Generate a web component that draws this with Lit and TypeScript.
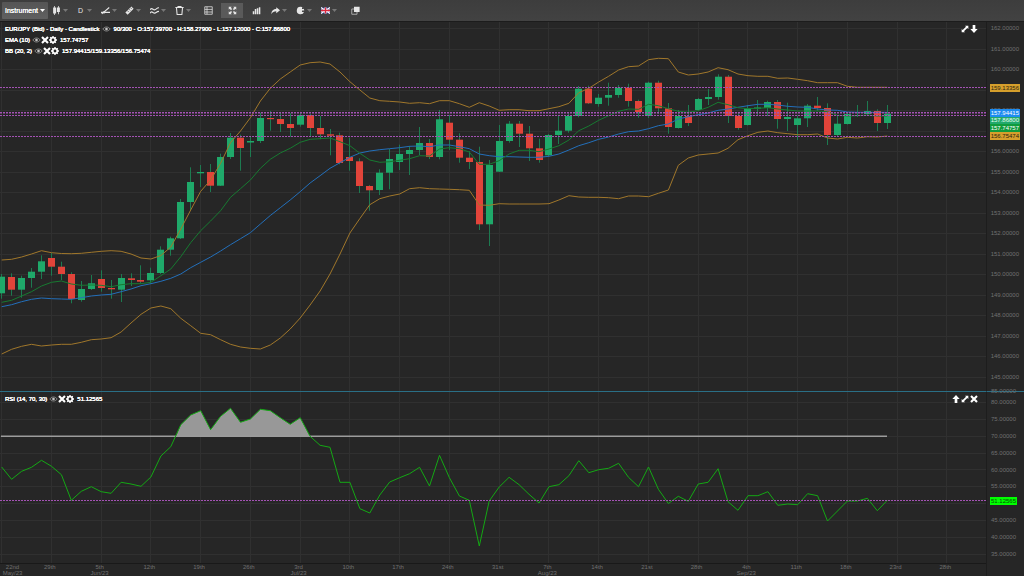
import { LitElement, html, css, svg } from "lit";
import { customElement, property } from "lit/decorators.js";

/* ---- Chart data, in plot units (1 bar = 9.95 units wide) ---- */
const BAR_START = 1.7;
const BAR_STEP = 9.95;
const barX = (i: number) => BAR_START + i * BAR_STEP;

// Candle: [rising, bodyTop, bodyBottom, wickTop, wickBottom]
type Candle = [number, number, number, number, number];
const CANDLES: Candle[] = [
  [1, 276.7, 293.3, 274, 298.7], [0, 277, 289.7, 273.3, 295.7], [1, 278, 289.7, 275.7, 297.7], [1, 271.7, 278, 268, 287.7],
  [1, 261.3, 271.7, 255.3, 279], [0, 258, 266.7, 253, 275.7], [0, 266.7, 274, 261.7, 280], [0, 274, 299, 272.3, 303.3],
  [1, 289, 300, 281, 301.7], [1, 283.3, 289, 275, 290], [0, 279, 288, 270.3, 291.7], [0, 288, 289.3, 280, 298.7],
  [1, 278, 289.7, 274, 302], [0, 278.3, 280, 273.3, 286], [0, 280, 281.7, 265.3, 283.3], [1, 273, 280.3, 267.7, 283.7],
  [1, 249.7, 273, 246.3, 274], [1, 238.3, 249.7, 236.7, 255.7], [1, 202, 238.3, 199, 239], [1, 182, 202, 167.3, 210],
  [1, 172, 173.3, 165, 187], [0, 172, 185.7, 164, 192], [1, 157, 185.7, 153.7, 186], [1, 137.7, 157, 133, 159],
  [0, 137.7, 148, 134.7, 170.7], [1, 141, 142.5, 136.7, 157], [1, 118, 141, 112.7, 143], [0, 118, 119.2, 111, 130.7],
  [0, 119, 124, 112, 132], [0, 124, 128, 113.3, 136.7], [1, 115, 124.7, 112, 126.7], [0, 115, 128, 114, 136],
  [0, 128, 134.3, 116, 139.3], [0, 134.3, 135.7, 129, 155.3], [0, 135.3, 163, 132.7, 164.3], [0, 157, 161, 137.7, 170.7],
  [0, 161.3, 186, 158.3, 193], [0, 186, 190.3, 185, 210.7], [1, 172.7, 190, 169.3, 195], [1, 159, 172.7, 149, 189.3],
  [1, 154, 162, 144.7, 170], [1, 150, 154, 146, 175], [1, 143, 150, 127, 155], [0, 143, 157, 139, 159],
  [1, 119.3, 157, 110, 159.3], [0, 122.7, 139.7, 115, 150], [0, 139.7, 157.7, 133.3, 162.7], [0, 157.7, 162, 151.3, 169],
  [0, 162, 224.3, 146.7, 230], [1, 165, 224.3, 160, 246], [1, 141, 171.7, 125, 172], [1, 123.7, 141, 121, 142.7],
  [0, 123.7, 133.7, 121, 147], [0, 133.7, 148.3, 126, 161], [0, 148.3, 160, 138.7, 162.7], [1, 135, 155.3, 134, 156],
  [1, 130.7, 135, 116, 144], [1, 116, 130.7, 113.3, 132.7], [1, 88.7, 116, 86, 117.3], [0, 88.7, 103.3, 85.7, 104],
  [1, 97.7, 104, 94, 106.7], [1, 95, 97.7, 82.7, 105.7], [1, 87.7, 95, 85, 97.7], [0, 87.7, 101, 83.7, 106.7],
  [0, 101, 112, 99.7, 117.7], [1, 82.7, 116, 81.7, 118], [0, 82.7, 108.3, 80.7, 114], [0, 108.3, 127, 103, 133.7],
  [1, 116, 128, 110, 128.5], [0, 116, 123, 105, 126], [1, 99, 110, 98, 111], [1, 97, 99, 89, 105],
  [1, 76.7, 97, 74.3, 99.7], [0, 76.7, 116, 75, 123], [0, 116, 128, 112, 129.7], [1, 108.5, 125, 105, 125.5],
  [1, 107.5, 108.7, 100, 115], [1, 102, 108, 100.7, 116], [0, 102, 119, 100, 128.7], [1, 117, 119, 102.7, 131],
  [1, 118.3, 125, 115.7, 140], [1, 105.7, 118.3, 104, 127], [0, 105.7, 108, 97, 111], [0, 108, 135, 103.3, 145],
  [1, 123.7, 135, 115, 136], [1, 114, 124, 112.3, 124.5], [1, 115, 116, 105, 117], [1, 111, 114, 101, 115],
  [0, 111, 123, 109.3, 131], [1, 113.7, 123, 105, 129],
];

const BB_UPPER = [
  260, 259.3, 257, 254, 250.7, 252.7, 253.5, 253.7, 253.3, 252.3, 251.3, 250.7, 251.3, 254, 258, 259, 255.5, 247, 229, 210,
  191.3, 180, 163.3, 142.7, 131, 117.7, 101, 88.3, 79, 72, 65, 62.7, 62, 64, 72, 81.7, 90, 98, 100.7, 101.3,
  102, 103.3, 102.7, 103.7, 100.7, 100.7, 103.7, 107.3, 102.7, 106, 110.3, 109.7, 109.7, 110.7, 110.7, 108.7, 106.7, 103.3, 92.7, 88.3,
  82, 76.3, 70, 66.7, 66, 59.7, 58.3, 58.7, 72, 75, 74, 72, 67.7, 69.7, 74, 75.7, 76.3, 76.3, 78.3, 78,
  79.3, 80.7, 82.7, 82.7, 82.7, 86.3, 87.3, 87.3, 87.3, 87.3,
];
const BB_LOWER = [
  354, 349.3, 346.3, 344.3, 346, 345, 344.3, 344.3, 342.3, 339.7, 339, 337.7, 332, 323, 314.3, 308, 306, 308.7, 318.3, 325.7,
  333.3, 334.7, 339.7, 344.3, 347, 348.3, 349, 345, 338, 329, 318, 305, 291, 274, 254, 233, 218.5, 204.7, 198.7, 196,
  194, 188.7, 187.7, 188.7, 189, 189.3, 189.7, 190.3, 205, 205.3, 203.7, 204, 204, 204, 204, 203.7, 200, 195.7, 197, 197.3,
  197.3, 197.7, 198.7, 196, 196, 196.7, 193.3, 190, 165.3, 158, 155, 154, 153, 148.3, 139.7, 135.7, 132.3, 131, 132.7, 133.7,
  134.7, 134.7, 134, 138, 139, 137.3, 138, 136.7, 137, 136,
];
const EMA = [
  302.3, 300.3, 296, 291.7, 286, 282.3, 281, 284, 285.3, 285, 285.3, 286.7, 284.7, 283.7, 283.7, 282.3, 275.7, 269, 256.7, 242.7,
  230.7, 221, 210.7, 197.3, 188.7, 180, 168.3, 159.3, 153, 148.3, 142.3, 139.3, 138.7, 138, 141.7, 145.7, 153.3, 160, 162.3, 161.7,
  160.3, 158.7, 155.7, 156, 149, 147.7, 148.7, 152, 164.3, 164.3, 160.7, 154, 150.3, 150.3, 151.7, 149, 145.7, 140, 130.7, 126,
  120.3, 115.7, 111.3, 109, 109.3, 104.3, 105.7, 108.7, 111.3, 112.3, 110.7, 107.3, 102.3, 104.7, 107.7, 108.7, 108.3, 107.7, 109, 110,
  111, 111, 111, 111.7, 115.3, 116, 115.7, 115, 116, 116,
];
const SMA = [
  306.7, 304.7, 301.7, 299.3, 298, 298.7, 299, 299.3, 297.7, 296, 295, 294.3, 291.7, 289, 285.7, 283.7, 281.3, 278.3, 274, 267.7,
  262.3, 257, 251, 244.7, 238.7, 232.7, 224, 215.5, 207.7, 200, 191.7, 183, 175.7, 168.3, 162.7, 157.3, 153, 151, 149.7, 148.7,
  147.7, 146.3, 146, 146.7, 145, 145, 146.7, 148.7, 154, 155.7, 156.7, 156.7, 157, 157.3, 157.3, 156.3, 154, 150, 145.7, 142.7,
  139.3, 137, 134, 131.7, 131, 128.7, 125.7, 124, 119, 116.7, 114.7, 113, 110.3, 109, 107.3, 105.7, 104.3, 104.3, 105, 106.3,
  107, 107.3, 109, 110, 110.3, 112, 112.3, 112.3, 112.3, 112.3,
];
const RSI = [
  467, 479.3, 471.3, 467.3, 460.3, 466.3, 474.7, 500.3, 491.3, 486.7, 491.7, 493.3, 482.3, 484, 486.3, 477, 456, 446.7, 424.7, 415,
  410.7, 429.7, 416.3, 408.3, 422.3, 419, 409.3, 410.7, 417.7, 424.3, 417.7, 436.3, 445.3, 447.3, 482.3, 482.3, 508.7, 513, 495, 482,
  477.7, 473.7, 467.3, 486, 455.3, 477.7, 496, 500.3, 546, 501, 487, 477.3, 484.7, 494.3, 503, 486.7, 484.7, 475.7, 460.7, 472.7,
  469.7, 468.3, 463.3, 477.3, 486.7, 467, 489.3, 503.5, 496.3, 501.3, 484, 482.3, 468.7, 501.7, 510.3, 495.7, 495.7, 491.7, 505.3, 504,
  504.7, 493.7, 495.7, 521, 511, 501, 501, 498.3, 510.7, 500.3,
];

const points = (series: number[]) => series.map((y, i) => `${barX(i).toFixed(1)},${y}`).join(" ");
const range = (n: number) => Array.from({ length: n }, (_, i) => i);

const PRICES = range(18).map((i) => `${162 - i}.00000`);
const LEVELS = range(10).map((i) => `${80 - i * 5}.00000`);
const DATES: [string, string?][] = [
  ["22nd", "May/23"], ["29th"], ["5th", "Jun/23"], ["12th"], ["19th"], ["26th"], ["3rd", "Jul/23"], ["10th"], ["17th"], ["24th"],
  ["31st"], ["7th", "Aug/23"], ["14th"], ["21st"], ["28th"], ["4th", "Sep/23"], ["11th"], ["18th"], ["23rd"], ["28th"],
];
const PRICE_TAGS = [
  { text: "159.13356", kind: "gold", y: 87.5 },
  { text: "156.75474", kind: "gold", y: 136 },
  { text: "157.74757", kind: "green", y: 127.5 },
  { text: "157.86800", kind: "mint", y: 120 },
  { text: "157.94415", kind: "blue", y: 112.5 },
];

/* ---- Icons, on a 12 x 12 grid ---- */
const ICONS: Record<string, unknown> = {
  candles: svg`<path d="M3 0h1v2h1.500v8H4v2H3v-2H1.500V2H3zM8 0h1v2h1.500v6H9v3H8V8H6.500V2H8z" fill="currentColor"/>`,
  lines: svg`<path d="M0 8.500h12M1 10.500 11 2" fill="none" stroke="currentColor" stroke-width="1.400"/><circle cx="4" cy="8.500" r="1.500" fill="currentColor"/>`,
  ruler: svg`<path d="M0.500 8.500 8.500 0.500 11.500 3.500 3.500 11.500z" fill="currentColor"/><path d="m3 6 2 2m0-4 2 2m0-4 2 2" stroke="#3f3f3f" stroke-width=".9"/>`,
  waves: svg`<path d="M0 5c3-4 4 1 6.500 0S10 1.500 12 2.500M0 9.500c3-4 4 1 6.500 0S10 6.500 12 7.500" fill="none" stroke="currentColor" stroke-width="1.600"/>`,
  trash: svg`<path d="M0.500 2h11M4 1.500V.6h4v.9M2 2.500 2.800 11.400h6.400L10 2.500" fill="none" stroke="currentColor" stroke-width="1.400"/>`,
  table: svg`<path d="M1 1h10v10H1zM4 1v10M1 4.500h10M1 8h10" fill="none" stroke="currentColor" stroke-width="1"/>`,
  expand: svg`<path d="M1 1h4L3.800 2.200 5.500 4 4 5.500 2.200 3.800 1 5zM11 1v4L9.800 3.800 8 5.500 6.500 4l1.700-1.800L7 1zM1 11V7l1.200 1.200L4 6.500 5.500 8 3.800 9.800 5 11zM11 11H7l1.200-1.200L6.500 8 8 6.500l1.800 1.700L11 7z" fill="currentColor"/>`,
  bars: svg`<path d="M1 7h2v4H1zM3.700 4h2v7h-2zM6.400 3h2v8h-2zM9.100 1.500h2V11h-2z" fill="currentColor"/>`,
  share: svg`<path d="M7 1.500 12 5.500 7 9.500V7C4 7 2 8 .5 11 .5 6 3.500 4 7 4z" fill="currentColor"/>`,
  palette: svg`<path d="M6 1a5 5 0 1 0 4.800 6.500C9 8.500 7.500 8 8 6.500s3 .3 3-1A5 5 0 0 0 6 1z" fill="currentColor"/><path d="M8 1.500h2.500V4H8z" fill="#3f3f3f"/>`,
  flag: svg`<path d="M0 2h12v8H0z" fill="#2b3f8f"/><path d="m0 2 12 8M12 2 0 10" stroke="#fff" stroke-width="1.600"/><path d="M6 2v8M0 6h12" stroke="#fff" stroke-width="3"/><path d="M6 2v8M0 6h12" stroke="#d8263c" stroke-width="1.700"/>`,
  copy: svg`<path d="M1 4h7v7H1z" fill="none" stroke="#aaa" stroke-width="1.300"/><path d="M4 1h7.500v7H4z" fill="currentColor"/>`,
  eye: svg`<path d="M.5 6C3 2 9 2 11.500 6 9 10 3 10 .5 6z" fill="none" stroke="#b5b5b5" stroke-width="1"/><circle cx="6" cy="6" r="2" fill="#c4c4c4"/>`,
  cross: svg`<path d="m1.500 1.500 9 9m0-9-9 9" stroke="currentColor" stroke-width="3.200"/>`,
  gear: svg`<circle cx="6" cy="6" r="3.400" fill="none" stroke="currentColor" stroke-width="2.600"/><path d="M6 0v2.500M6 9.500V12M0 6h2.500M9.500 6H12M1.800 1.800l1.700 1.700M8.500 8.500l1.700 1.700M10.200 1.800 8.500 3.500M3.500 8.500l-1.700 1.700" stroke="currentColor" stroke-width="2"/>`,
  resize: svg`<path d="M6 1h5v5L9.500 4.500 4.500 9.500 6 11H1V6l1.500 1.500 5-5z" fill="currentColor"/>`,
  down: svg`<path d="M4 0h4v6h3.500L6 12 .5 6H4z" fill="currentColor"/>`,
  up: svg`<path d="M4 12h4V6h3.500L6 0 .5 6H4z" fill="currentColor"/>`,
};
const icon = (name: string) => html`<svg class="icon" viewBox="0 0 12 12" aria-hidden="true">${ICONS[name]}</svg>`;
const caret = () => html`<svg class="caret" viewBox="0 0 10 6" aria-hidden="true"><path d="M0 0h10L5 6z" fill="currentColor" /></svg>`;

const buttonReset = css`
  button {
    margin: 0;
    padding: 0;
    border: 0;
    background: none;
    color: inherit;
    font: inherit;
    cursor: pointer;
  }
  .icon {
    display: block;
    width: 8px;
    height: 8px;
  }
`;

@customElement("chart-toolbar")
export class ChartToolbar extends LitElement {
  static styles = [
    buttonReset,
    css`
      :host {
        display: flex;
        align-items: stretch;
        box-sizing: border-box;
        padding: 2px;
        background: linear-gradient(#3d3d3d, #424242);
        border-bottom: 1px solid #1c1c1c;
        color: #e6e6e6;
      }
      .icon {
        width: 9px;
        height: 9px;
      }
      .instrument {
        display: flex;
        align-items: center;
        gap: 2px;
        width: 46px;
        padding-left: 3px;
        margin-right: 1px;
        background: linear-gradient(#555, #606060);
        border-radius: 1px;
        color: #fff;
        font-size: 7px;
        text-shadow: 0 0 0 #fff;
      }
      .instrument .caret {
        color: #fff;
      }
      .menu {
        display: flex;
        align-items: center;
        gap: 2px;
        width: 25px;
        padding-left: 3px;
      }
      .menu.tight {
        width: 24px;
      }
      .letter {
        width: 9px;
        font-size: 7px;
        text-align: center;
      }
      .caret {
        width: 5px;
        height: 3px;
        color: #777;
      }
      .plain {
        display: grid;
        place-items: center;
        width: 24px;
        border: 1px solid transparent;
        background-clip: padding-box;
      }
      .plain.active {
        background-color: #5a5a5a;
      }
    `,
  ];

  private menu(name: string, label: string, tight = false) {
    return html`<button class="menu ${tight ? "tight" : ""}" aria-label=${label}>
      ${name === "D" ? html`<span class="letter">D</span>` : icon(name)}${caret()}
    </button>`;
  }

  private plain(name: string, label: string, active = false) {
    return html`<button class="plain ${active ? "active" : ""}" aria-label=${label}>${icon(name)}</button>`;
  }

  render() {
    return html`
      <button class="instrument">Instrument ${caret()}</button>
      ${this.menu("candles", "Chart type", true)} ${this.menu("D", "Period")} ${this.menu("lines", "Drawings", true)}
      ${this.menu("ruler", "Measure")} ${this.menu("waves", "Indicators")} ${this.menu("trash", "Remove", true)}
      ${this.plain("table", "Data table")} ${this.plain("expand", "Fit chart", true)} ${this.plain("bars", "Volume")}
      ${this.menu("share", "Share")} ${this.menu("palette", "Theme")} ${this.menu("flag", "Language")}
      ${this.plain("copy", "Duplicate")}
    `;
  }
}

@customElement("chart-legend")
export class ChartLegend extends LitElement {
  @property() name = "";
  @property() value = "";
  @property({ type: Boolean }) editable = false;

  static styles = [
    buttonReset,
    css`
      :host {
        display: flex;
        align-items: center;
        height: 11px;
        color: #fff;
        font-size: 6px;
        text-shadow: 0 0 0 #fff, 0 0 0 #fff;
        white-space: nowrap;
      }
      .tools {
        display: flex;
        margin: 0 3px 0 2px;
      }
      .eye .icon {
        width: 9px;
      }
    `,
  ];

  render() {
    return html`
      <span>${this.name}</span>
      <span class="tools">
        <button class="eye" aria-label="Toggle visibility">${icon("eye")}</button>
        ${this.editable
          ? html`<button aria-label="Remove">${icon("cross")}</button><button aria-label="Settings">${icon("gear")}</button>`
          : null}
      </span>
      <span>${this.value}</span>
    `;
  }
}

@customElement("app-root")
export class AppRoot extends LitElement {
  static styles = [
    buttonReset,
    css`
      :host {
        display: grid;
        grid-template-rows: 22px minmax(0, 1fr);
        height: 100vh;
        overflow: hidden;
        background: #262626;
        font-family: "Liberation Sans", Arial, sans-serif;
      }
      .chart {
        display: grid;
        grid-template-columns: minmax(0, 1fr) 38px;
        grid-template-rows: minmax(0, 369fr) minmax(0, 172fr) 13px;
      }
      .panel {
        position: relative;
        min-height: 0;
      }
      .second {
        border-top: 1px solid #2a6f86;
      }
      .plot {
        display: block;
        width: 100%;
        height: 100%;
      }
      .legends {
        position: absolute;
        top: 1px;
        left: 5px;
      }
      .actions {
        position: absolute;
        top: 3px;
        right: 8px;
        display: flex;
        gap: 1px;
        color: #fff;
      }
      .axis {
        position: relative;
        display: flex;
        flex-direction: column;
        justify-content: space-between;
        align-items: flex-end;
        padding: 2px 5px 10px 0;
        border-left: 1px solid #1d1d1d;
        color: #707070;
        font-size: 6px;
        line-height: 8px;
      }
      .axis.levels {
        padding: 6px 8px 5px 0;
      }
      .edge {
        position: absolute;
        top: -5px;
        right: 8px;
      }
      .tag {
        position: absolute;
        right: 4px;
        padding: 0 1px;
        margin-top: -4px;
      }
      .gold {
        background: #d69f2c;
        color: #2c2410;
      }
      .green {
        background: #0f9b3c;
        color: #fff;
      }
      .mint {
        background: #22a96c;
        color: #e8fff3;
      }
      .blue {
        background: #1e8cf0;
        color: #fff;
      }
      .lime {
        right: 7px;
        background: #0f0;
        color: #064d06;
      }
      .dates {
        display: grid;
        grid-template-columns: 100fr repeat(19, 199fr) 63fr;
        border-top: 1px solid #191919;
        color: #707070;
        font-size: 6px;
        line-height: 6px;
        text-align: center;
      }
      .date {
        display: flex;
        flex-direction: column;
        align-items: center;
        white-space: nowrap;
      }
      .corner {
        border-left: 1px solid #1d1d1d;
      }
      .grid {
        stroke: #303030;
        stroke-width: 1;
      }
      .up {
        fill: #1fa96a;
      }
      .fall {
        fill: #e2443a;
      }
      .wick {
        stroke: #1d7a50;
        stroke-width: 1;
      }
      .line {
        fill: none;
        stroke-width: 1;
        stroke-linejoin: round;
      }
      .band {
        stroke: #a0772b;
      }
      .ema {
        stroke: #177a31;
      }
      .sma {
        stroke: #236fba;
      }
      .rsi {
        stroke: #14a814;
      }
      .marker {
        stroke: #a352b3;
        stroke-width: 1;
        stroke-dasharray: 2 1;
      }
      .soft {
        opacity: 0.5;
      }
      .limit {
        stroke: #9c9c9c;
        stroke-width: 1;
      }
      .over {
        fill: #989898;
      }
    `,
  ];

  private gridLines(top: number, bottom: number, first: number, step: number, count: number) {
    return svg`
      ${range(20).map((i) => svg`<line class="grid" x1=${Math.floor(1.7 + i * 49.75) + 0.5} x2=${Math.floor(1.7 + i * 49.75) + 0.5} y1=${top} y2=${bottom} />`)}
      ${range(count).map((i) => svg`<line class="grid" x1="0" x2="986" y1=${Math.floor(first + i * step) + 0.5} y2=${Math.floor(first + i * step) + 0.5} />`)}
    `;
  }

  private candle([rising, top, bottom, high, low]: Candle, i: number) {
    const x = Math.floor(barX(i)) + 0.5;
    return svg`
      <line class="wick" x1=${x} x2=${x} y1=${high} y2=${low} />
      <rect class=${rising ? "up" : "fall"} x=${x - 3.5} y=${top} width="7" height=${Math.max(1, bottom - top)} />
    `;
  }

  private pricePlot() {
    return html`<svg class="plot" viewBox="0 22 986 369" preserveAspectRatio="none" role="img" aria-label="EUR/JPY daily candles">
      ${this.gridLines(22, 391, 28.5, 20.5, 18)}
      ${CANDLES.map((c, i) => this.candle(c, i))}
      <polyline class="line band" points=${points(BB_UPPER)} />
      <polyline class="line band" points=${points(BB_LOWER)} />
      <polyline class="line sma" points=${points(SMA)} />
      <polyline class="line ema" points=${points(EMA)} />
      <line class="marker" x1="0" x2="986" y1="87.5" y2="87.5" />
      <line class="marker" x1="0" x2="986" y1="112.5" y2="112.5" />
      <line class="marker soft" x1="0" x2="986" y1="113.5" y2="113.5" />
      <line class="marker" x1="0" x2="986" y1="115.5" y2="115.5" />
      <line class="marker" x1="0" x2="986" y1="136.5" y2="136.5" />
    </svg>`;
  }

  private rsiPlot() {
    const area = RSI.slice(18, 31).map((y, i) => `${barX(i + 18).toFixed(1)},${y}`).join(" ");
    return html`<svg class="plot" viewBox="0 392 986 171" preserveAspectRatio="none" role="img" aria-label="Relative strength index">
      ${this.gridLines(392, 563, 402.3, 16.9, 10)}
      <polygon class="over" points="176,436.500 ${area} 310,436.500" />
      <line class="limit soft" x1="1" x2="887" y1="435.500" y2="435.500" />
      <line class="limit" x1="1" x2="887" y1="436.500" y2="436.500" />
      <polyline class="line rsi" points=${points(RSI)} />
      <line class="marker" x1="0" x2="986" y1="500.500" y2="500.500" />
    </svg>`;
  }

  render() {
    return html`
      <chart-toolbar></chart-toolbar>
      <main class="chart">
        <section class="panel">
          ${this.pricePlot()}
          <div class="legends">
            <chart-legend
              name="EUR/JPY (Bid) - Daily - Candlestick"
              value="90/300 - O:157.39700 - H:158.27900 - L:157.12000 - C:157.86800"
            ></chart-legend>
            <chart-legend name="EMA (10)" value="157.74757" editable></chart-legend>
            <chart-legend name="BB (20, 2)" value="157.94415/159.13356/156.75474" editable></chart-legend>
          </div>
          <div class="actions">
            <button aria-label="Maximise">${icon("resize")}</button>
            <button aria-label="Move down">${icon("down")}</button>
          </div>
        </section>
        <div class="axis">
          ${PRICES.map((p) => html`<span>${p}</span>`)}
          ${PRICE_TAGS.map((t) => html`<span class="tag ${t.kind}" style="top: ${((t.y - 22) / 369) * 100}%">${t.text}</span>`)}
        </div>
        <section class="panel second">
          ${this.rsiPlot()}
          <div class="legends">
            <chart-legend name="RSI (14, 70, 30)" value="51.12565" editable></chart-legend>
          </div>
          <div class="actions">
            <button aria-label="Move up">${icon("up")}</button>
            <button aria-label="Maximise">${icon("resize")}</button>
            <button aria-label="Close">${icon("cross")}</button>
          </div>
        </section>
        <div class="axis levels second">
          <span class="edge">85.00000</span>
          ${LEVELS.map((p) => html`<span>${p}</span>`)}
          <span class="tag lime" style="top: ${((500.5 - 392) / 171) * 100}%">51.12565</span>
        </div>
        <div class="dates">
          ${DATES.map(([day, month]) => html`<div class="date"><span>${day}</span>${month ? html`<span>${month}</span>` : null}</div>`)}
        </div>
        <div class="corner"></div>
      </main>
    `;
  }
}
